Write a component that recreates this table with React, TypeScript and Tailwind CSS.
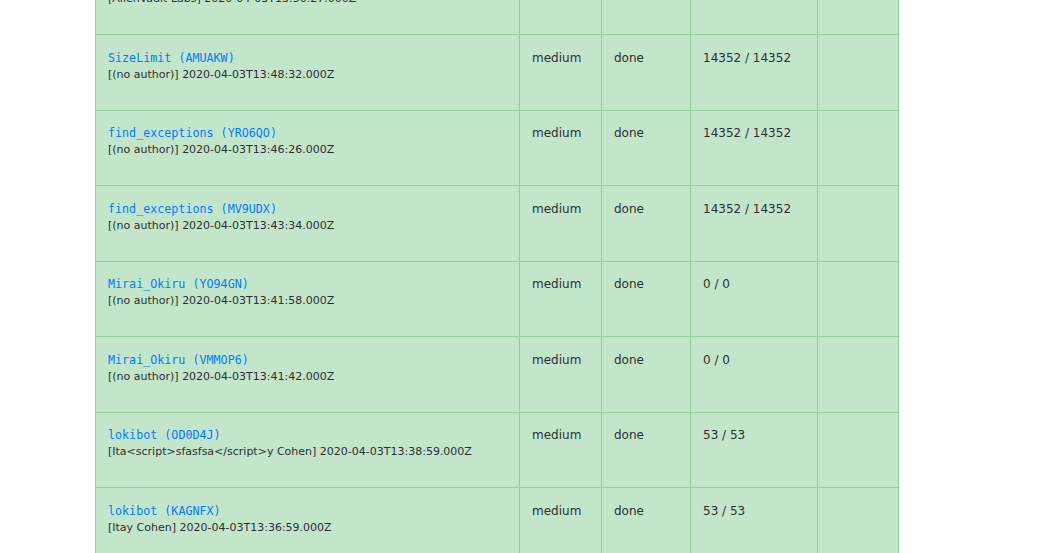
const rows = [
  { name: "AlienVault_Pulse", id: "Q7ZK2P", author: "AlienVault Labs", date: "2020-04-03T13:50:27.000Z", count: "0 / 0" },
  { name: "SizeLimit", id: "AMUAKW", author: "(no author)", date: "2020-04-03T13:48:32.000Z", count: "14352 / 14352" },
  { name: "find_exceptions", id: "YRO6QO", author: "(no author)", date: "2020-04-03T13:46:26.000Z", count: "14352 / 14352" },
  { name: "find_exceptions", id: "MV9UDX", author: "(no author)", date: "2020-04-03T13:43:34.000Z", count: "14352 / 14352" },
  { name: "Mirai_Okiru", id: "YO94GN", author: "(no author)", date: "2020-04-03T13:41:58.000Z", count: "0 / 0" },
  { name: "Mirai_Okiru", id: "VMMOP6", author: "(no author)", date: "2020-04-03T13:41:42.000Z", count: "0 / 0" },
  { name: "lokibot", id: "OD0D4J", author: "Ita<script>sfasfsa</script>y Cohen", date: "2020-04-03T13:38:59.000Z", count: "53 / 53" },
  { name: "lokibot", id: "KAGNFX", author: "Itay Cohen", date: "2020-04-03T13:36:59.000Z", count: "53 / 53" },
];

const cell = "border border-[#8fd19e] px-3 pt-[13.5px] pb-3 align-top";

export default function App() {
  return (
    <div className="h-[553px] overflow-hidden bg-white font-['DejaVu_Sans',sans-serif] text-[#2b2f33]">
      <div className="pl-[95px] mt-[-41.5px]">
        <table className="w-[803px] border-collapse table-fixed bg-[#c3e6cb] text-[12px] leading-[18px]">
          <colgroup>
            <col className="w-[424px]" />
            <col className="w-[82px]" />
            <col className="w-[89px]" />
            <col className="w-[127px]" />
            <col className="w-[81px]" />
          </colgroup>
          <tbody>
            {rows.map((r) => (
              <tr key={r.id}>
                <td className={cell}>
                  <a
                    href="#"
                    className="block font-['DejaVu_Sans_Mono',monospace] text-[11.7px] leading-[18px] text-[#007bff]"
                  >
                    {r.name} ({r.id})
                  </a>
                  <div className="text-[11px] leading-[15px]">
                    [{r.author}] {r.date}
                  </div>
                  <div className="h-[16px]"></div>
                </td>
                <td className={cell}>medium</td>
                <td className={cell}>done</td>
                <td className={cell}>{r.count}</td>
                <td className={cell}></td>
              </tr>
            ))}
          </tbody>
        </table>
      </div>
    </div>
  );
}
